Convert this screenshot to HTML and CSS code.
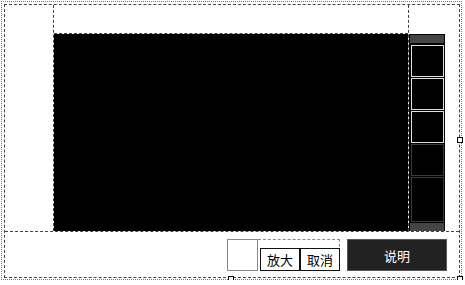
FILE: index.html
```html
<!DOCTYPE html>
<html lang="zh-CN">
<head>
    <meta charset="UTF-8">
    <title>视频预览</title>
    <link rel="stylesheet" href="styles.css">
</head>
<body>
    <div class="frame">
        <div class="inner">
            <div class="main">
                <div class="left-col"></div>
                <div class="center-col">
                    <div class="top-bar"></div>
                    <div class="video"></div>
                </div>
                <div class="side-col">
                    <div class="side-top"></div>
                    <div class="side-body">
                        <div class="strip">
                            <div class="strip-head"></div>
                            <div class="thumb"></div>
                            <div class="thumb"></div>
                            <div class="thumb"></div>
                            <div class="thumb dim"></div>
                            <div class="thumb dim last"></div>
                            <div class="strip-foot"></div>
                        </div>
                    </div>
                </div>
            </div>

            <div class="toolbar">
                <div class="blank-box"></div>
                <div class="zoom-group">
                    <button class="small-btn">放大</button>
                    <button class="small-btn">取消</button>
                </div>
                <button class="help-btn">说明</button>
            </div>
        </div>

        <!-- selection handles -->
        <span class="handle handle-right"></span>
        <span class="handle handle-bottom"></span>
        <span class="handle handle-corner"></span>
    </div>
</body>
</html>
```

FILE: styles.css
```css
body {
    margin: 0;
    background: #fff;
    font-family: "Noto Sans CJK SC", "Noto Sans", sans-serif;
}

.frame {
    position: relative;
    margin: 1px 0 0 1px;
    width: 461px;
    height: 279px;
    border: 1px dotted #777;
    padding: 2px 1px 1px 2px;
    box-sizing: border-box;
}

.inner {
    border: 1px dashed #444;
    height: 274px;
    box-sizing: border-box;
    display: flex;
    flex-direction: column;
}

.main {
    display: flex;
    height: 227px;
    border-bottom: 1px dashed #444;
    box-sizing: border-box;
}

.left-col {
    width: 48px;
    border-right: 1px dashed #444;
}

.center-col {
    width: 354px;
    display: flex;
    flex-direction: column;
}

.top-bar {
    height: 28px;
    border-bottom: 1px dashed #444;
}

.video {
    flex: 1;
    background: #000;
}

.side-col {
    flex: 1;
    border-left: 1px dashed #444;
    display: flex;
    flex-direction: column;
}

.side-top {
    height: 29px;
}

.side-body {
    flex: 1;
    display: flex;
}

.strip {
    width: 36px;
    background: #000;
    padding: 1px 1px 0 1px;
    box-sizing: border-box;
    display: flex;
    flex-direction: column;
}

.strip-head,
.strip-foot {
    height: 8px;
    background: #444;
}

.strip-head {
    margin-bottom: 2px;
}

.thumb {
    height: 32px;
    margin: 0 0 1px 1px;
    border: 1px solid #e0e0e0;
    background: #000;
    box-sizing: border-box;
}

.thumb.dim {
    border-color: #3a3a3a;
}

.thumb.last {
    flex: 1;
}

.toolbar {
    flex: 1;
    display: flex;
    justify-content: flex-end;
    align-items: flex-start;
    padding: 7px 12px 0 0;
}

.blank-box {
    width: 31px;
    height: 32px;
    border: 1px solid #888;
    box-sizing: border-box;
}

.zoom-group {
    width: 82px;
    height: 32px;
    border-top: 1px dashed #888;
    border-right: 1px dashed #888;
    box-sizing: border-box;
    display: flex;
    align-items: flex-end;
    padding-left: 2px;
}

.small-btn {
    width: 40px;
    height: 23px;
    margin: 0;
    padding: 0;
    border: 1px solid #111;
    background: #fff;
    color: #000;
    font-family: "Noto Sans CJK SC", sans-serif;
    font-size: 13px;
    line-height: 20px;
}

.small-btn + .small-btn {
    margin-right: -1px;
}

.help-btn {
    width: 100px;
    height: 32px;
    margin: 0 0 0 7px;
    padding: 0;
    border: 1px solid #555;
    background: #222;
    color: #fff;
    font-family: "Noto Sans CJK SC", sans-serif;
    font-size: 13px;
}

.handle {
    position: absolute;
    width: 6px;
    height: 6px;
    border: 1px solid #000;
    background: #fff;
    box-sizing: border-box;
}

.handle-right {
    left: 455px;
    top: 135px;
}

.handle-bottom {
    left: 226px;
    top: 274px;
}

.handle-corner {
    left: 455px;
    top: 274px;
}
```
